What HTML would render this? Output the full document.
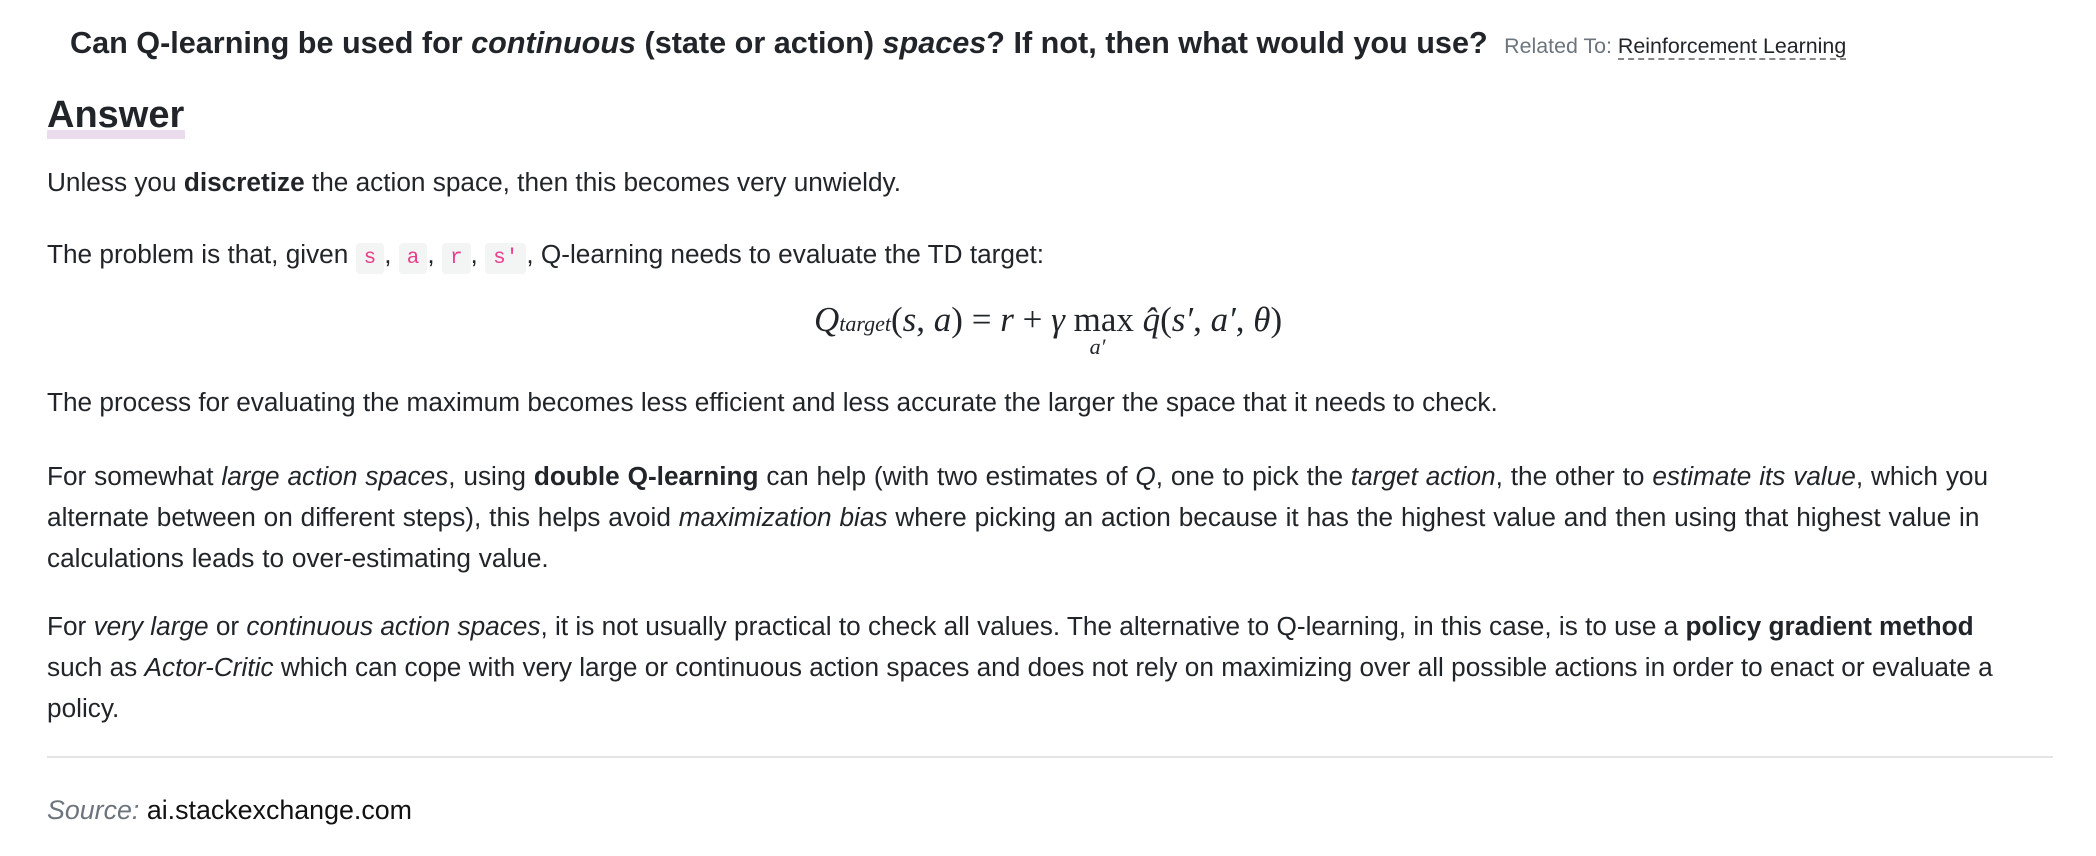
<!DOCTYPE html>
<html><head><meta charset="utf-8"><style>
html,body{margin:0;padding:0;background:#fff;}
body{width:2096px;height:856px;position:relative;overflow:hidden;font-family:"Liberation Sans",Arial,sans-serif;color:#212529;}
.a{position:absolute;white-space:nowrap;}
.p{font-size:26.2px;line-height:41px;left:47px;}
h1{position:absolute;left:70px;top:23px;margin:0;font-size:30.6px;font-weight:bold;white-space:nowrap;line-height:40px;}
.rel{font-size:21.4px;font-weight:normal;color:#6c757d;margin-left:8px;}
.rel a{color:#212529;text-decoration:none;border-bottom:2px dashed #888;}
.ans{position:absolute;left:47px;top:92px;font-size:38px;font-weight:bold;line-height:46px;margin:0;}
.hl{position:absolute;left:47px;top:130px;width:138px;height:9px;background:#eadcec;}
code{font-family:"Liberation Mono",monospace;font-size:21px;color:#e83e8c;background:#f3f4f4;padding:4px 8px;border-radius:4px;}
.f{font-family:"Liberation Serif",serif;font-size:35px;}
hr{position:absolute;left:47px;width:2006px;top:756px;margin:0;border:0;border-top:2px solid #e4e4e4;}
</style></head><body>
<h1>Can Q-learning be used for <i>continuous</i> (state or action) <i>spaces</i>? If not, then what would you use? <span class="rel">Related To: <a>Reinforcement Learning</a></span></h1>
<div class="hl"></div>
<div class="ans">Answer</div>
<div class="a p" style="top:162px">Unless you <b>discretize</b> the action space, then this becomes very unwieldy.</div>
<div class="a p" style="top:234px">The problem is that, given <code>s</code>, <code>a</code>, <code>r</code>, <code>s'</code>, Q-learning needs to evaluate the TD target:</div>
<div class="a f" style="left:814px;top:300px"><i>Q</i><i style="font-size:22px">target</i>(<i>s</i>, <i>a</i>) = <i>r</i> + <i>γ</i> <span style="position:relative">max<i style="position:absolute;left:16px;top:34px;font-size:22px">a′</i></span> <i>q̂</i>(<i>s′</i>, <i>a′</i>, <i>θ</i>)</div>
<div class="a p" style="top:382px">The process for evaluating the maximum becomes less efficient and less accurate the larger the space that it needs to check.</div>
<div class="a p" style="top:456px;white-space:normal;width:2010px;word-spacing:0.6px">For somewhat <i>large action spaces</i>, using <b>double Q-learning</b> can help (with two estimates of <i>Q</i>, one to pick the <i>target action</i>, the other to <i>estimate its value</i>, which you alternate between on different steps), this helps avoid <i>maximization bias</i> where picking an action because it has the highest value and then using that highest value in calculations leads to over-estimating value.</div>
<div class="a p" style="top:606px;white-space:normal;width:1985px">For <i>very large</i> or <i>continuous action spaces</i>, it is not usually practical to check all values. The alternative to Q-learning, in this case, is to use a <b>policy gradient method</b> such as <i>Actor-Critic</i> which can cope with very large or continuous action spaces and does not rely on maximizing over all possible actions in order to enact or evaluate a policy.</div>
<hr>
<div class="a p" style="top:790px;font-size:26.8px"><i style="color:#6c757d">Source:</i> <span style="color:#111">ai.stackexchange.com</span></div>
</body></html>
